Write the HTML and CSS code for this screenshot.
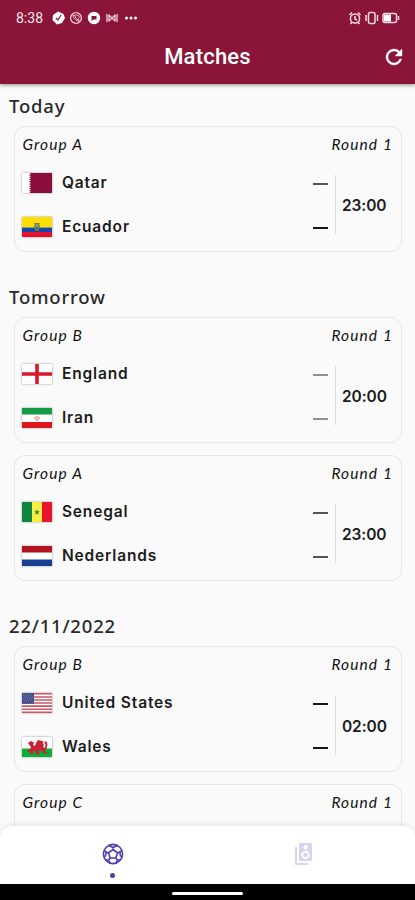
FILE: index.html
```html
<!DOCTYPE html>
<html lang="en">
<head>
<meta charset="utf-8">
<title>Matches</title>
<link rel="stylesheet" href="styles.css">
</head>
<body>
<div class="app">
  <header class="header">
    <div class="status">
      <span class="clock">8:38</span>
      <svg class="status-left" width="90" height="16" viewBox="0 0 90 16">
        <path d="M7 1.500 12.500 4 14 8l-3 5-5 1.500L1.500 10 2 5z" fill="#fff"/>
        <path d="M5 8l2 2 3-5" fill="none" stroke="#8a1538" stroke-width="1.200"/>
        <circle cx="25" cy="8" r="5.400" fill="none" stroke="#ecc5cf" stroke-width="1.400"/>
        <path d="M22 5c0 3 3 6 6 6l-.5-2-1.500.3-2-2.300.5-1.500zM25 4.500q3 0 3.500 3.500" fill="none" stroke="#ecc5cf"/>
        <circle cx="43" cy="8" r="6.200" fill="#fff"/>
        <path d="M40.500 6h5v3.500H42.500L40.500 11z" fill="#8a1538"/>
        <path d="M56 4v8M58 4.500v7M58 5l3 3 3-3M58 11l3-3 3 3M64 4.500v7M66 4v8" fill="none" stroke="#ecc5cf" stroke-width="1.400"/>
        <g fill="#fff"><circle cx="75.500" cy="8" r="1.500"/><circle cx="80" cy="8" r="1.500"/><circle cx="84.500" cy="8" r="1.500"/></g>
      </svg>
      <svg class="status-right" width="52" height="16" viewBox="0 0 52 16" fill="none" stroke="#f5d9df" stroke-width="1.500">
        <circle cx="6" cy="8.500" r="4.600"/><path d="M6 6v3l2 1M.5 5 3 2.500M11.500 5 9 2.500M3 12l-1.500 2M9 12l1.500 2"/>
        <rect x="19.500" y="2.500" width="6.500" height="11" rx="1.500"/><path d="M17 5v6M28.500 5v6"/>
        <rect x="34" y="3.500" width="13.500" height="9" rx="2"/><path d="M49.500 6v4"/><rect x="35" y="4.500" width="7" height="7" fill="#fff" stroke="none"/>
      </svg>
    </div>
    <div class="toolbar">
      <h1>Matches</h1>
      <svg class="refresh" width="24" height="24" viewBox="0 0 24 24"><path fill="#fff" stroke="#fff" stroke-width=".4" d="M17.650 6.350A8 8 0 1 0 19.730 14h-2.080A6 6 0 1 1 12 6c1.660 0 3.140.690 4.220 1.780L13 11h7V4z"/></svg>
    </div>
  </header>

  <main class="matches">
    <section>
      <h2>Today</h2>
      <article class="card">
        <div class="meta"><span>Group A</span><span>Round 1</span></div>
        <div class="fixture">
          <div class="teams">
            <div class="team"><svg class="flag" viewBox="0 0 30 20"><path fill="#fff" d="M0 0h30v20H0z"/><path fill="#8a0d3c" d="M30 0H7l2 1.100-2 1.100 2 1.100-2 1.100 2 1.100-2 1.100 2 1.100-2 1.100 2 1.200-2 1.100 2 1.100-2 1.100 2 1.100-2 1.100 2 1.100-2 1.100 2 1.100L7 20h23z"/></svg><span class="name">Qatar</span><i class="score soft"></i></div>
            <div class="team"><svg class="flag" viewBox="0 0 30 20"><path fill="#ffde00" d="M0 0h30v10.500H0z"/><path fill="#1648a8" d="M0 10.500h30V15H0z"/><path fill="#e8112d" d="M0 15h30v5H0z"/><path d="M11.500 6.500q2-1 3.500 0 1.500-1 3.500 0l-2.500 1.500h-2z" fill="#8c7225"/><ellipse cx="15" cy="10" rx="2.400" ry="3.500" fill="#80aaa8" stroke="#806b25"/><path d="M13.500 11l1.500-2 1.500 2v1.500h-3z" fill="#456f46"/></svg><span class="name">Ecuador</span><i class="score"></i></div>
          </div>
          <time>23:00</time>
        </div>
      </article>
    </section>

    <section>
      <h2>Tomorrow</h2>
      <article class="card">
        <div class="meta"><span>Group B</span><span>Round 1</span></div>
        <div class="fixture">
          <div class="teams">
            <div class="team"><svg class="flag" viewBox="0 0 30 20"><path fill="#fff" d="M0 0h30v20H0z"/><path fill="#d9162b" d="M13.200 0h3.600v8.200H30v3.600H16.800V20h-3.600v-8.200H0V8.200h13.200z"/></svg><span class="name">England</span><i class="score pale"></i></div>
            <div class="team"><svg class="flag" viewBox="0 0 30 20"><path fill="#fff" d="M0 0h30v20H0z"/><path fill="#159b45" d="M0 0h30v6.500H0z"/><path fill="#df1820" d="M0 14h30v6H0z"/><path d="M15 8v4.500M13.500 8.500q-2 2.500 1 3.500M16.500 8.500q2 2.500-1 3.500" fill="none" stroke="#e9818a"/></svg><span class="name">Iran</span><i class="score pale"></i></div>
          </div>
          <time>20:00</time>
        </div>
      </article>
      <article class="card">
        <div class="meta"><span>Group A</span><span>Round 1</span></div>
        <div class="fixture">
          <div class="teams">
            <div class="team"><svg class="flag" viewBox="0 0 30 20"><path fill="#11853f" d="M0 0h10v20H0z"/><path fill="#fdef42" d="M10 0h10v20H10z"/><path fill="#e9152c" d="M20 0h10v20H20z"/><path fill="#218b3e" d="M15 7l.8 2.200h2.200l-1.800 1.400.7 2.200L15 11.500l-1.900 1.300.7-2.200L12 9.200h2.200z"/></svg><span class="name">Senegal</span><i class="score soft"></i></div>
            <div class="team"><svg class="flag" viewBox="0 0 30 20"><path fill="#fff" d="M0 0h30v20H0z"/><path fill="#b3131e" d="M0 0h30v6.500H0z"/><path fill="#174093" d="M0 13.500h30V20H0z"/></svg><span class="name">Nederlands</span><i class="score soft"></i></div>
          </div>
          <time>23:00</time>
        </div>
      </article>
    </section>

    <section>
      <h2>22/11/2022</h2>
      <article class="card">
        <div class="meta"><span>Group B</span><span>Round 1</span></div>
        <div class="fixture">
          <div class="teams">
            <div class="team"><svg class="flag" viewBox="0 0 30 20"><path fill="#fff" d="M0 0h30v20H0z"/><path d="M0 .8h30M0 3.900h30M0 7h30M0 10h30M0 13.100h30M0 16.200h30M0 19.200h30" stroke="#cc5765" stroke-width="1.550"/><path fill="#45508b" d="M0 0h12v10.800H0z"/><path d="M1 2h10M2 4h9M1 6h10M2 8h9" stroke="#a9afcf" stroke-width=".7" stroke-dasharray=".7 1.300"/></svg><span class="name">United States</span><i class="score"></i></div>
            <div class="team"><svg class="flag" viewBox="0 0 30 20"><path fill="#fff" d="M0 0h30v20H0z"/><path fill="#0cae37" d="M0 11.500h30V20H0z"/><path fill="#ca2033" d="M6 6l3-2 3 1.500-1 2.500 2 1 1-3 2-3 6 1.500-1.500 1.500 1.500 2-1 2 2 1 .5-4-1.500-1 2-2 1.500 3-1 5-2 1.500 1.500 2h3l-1 1h-4l-2.500-3-3 .5 1 2.500-1 1h-3l1-1.500-2-2.500-2 1.500 2 2H8l1-2.500-3 .5-1-1.500 3-1 1-2.500z"/></svg><span class="name">Wales</span><i class="score"></i></div>
          </div>
          <time>02:00</time>
        </div>
      </article>
      <article class="card">
        <div class="meta"><span>Group C</span><span>Round 1</span></div>
      </article>
    </section>
  </main>

  <nav class="tabs">
    <div class="tab active">
      <svg width="24" height="24" viewBox="0 0 24 24" fill="none" stroke="#4d3db5" stroke-width="1.600"><circle cx="12" cy="12" r="9.600"/><path d="M12 7.500l4.500 3.300-1.700 5.200H9.200l-1.700-5.200zM12 7.500V5M16.500 10.800l2.400-.8M14.800 16l1.700 2.300M9.200 16l-1.700 2.300M7.500 10.800 5.100 10M8 3.500 12 5.500l4-2M21 8.500 18.900 10l.6 4 1.600.5M16.500 18.300l-1.800 3M16.500 18.300l3-.5M7.500 18.300l1.800 3M7.500 18.300l-3-.5M3 8.500 5.100 10l-.6 4-1.600.5"/></svg>
      <span class="dot"></span>
    </div>
    <div class="tab">
      <svg width="24" height="24" viewBox="0 0 24 24" fill="#d3d6ec"><path fill-rule="evenodd" d="M8.200 1H18.800Q20 1 20 2.200V17.800Q20 19 18.800 19H8.200Q7 19 7 17.800V2.200Q7 1 8.200 1zM13.500 3a2.200 2.200 0 1 0 0 4.400 2.200 2.200 0 0 0 0-4.400zM13.500 8.700a4.200 4.200 0 1 0 0 8.400 4.200 4.200 0 0 0 0-8.400z"/><circle cx="13.500" cy="12.900" r="2.400"/><path d="M3 5h2v16h11v2H4q-1 0-1-1z"/></svg>
    </div>
  </nav>
  <div class="system-bar"><span></span></div>
</div>
</body>
</html>
```
FILE: styles.css
```css
* { box-sizing: border-box; }
body { margin: 0; background: #fafafa; color: #1b1b1b; }
.app { height: 900px; display: flex; flex-direction: column; overflow: hidden; }
svg { display: block; flex: none; }

.header { flex: none; height: 84px; background: #8a1538; color: #fff; font-family: Roboto, sans-serif; box-shadow: 0 1px 4px rgba(0, 0, 0, .45); z-index: 1; }
.status { height: 35px; padding: 1px 14px 0 16px; display: flex; align-items: center; }
.clock { width: 35px; font-size: 14px; color: #f8e6ea; }
.status-right { margin-left: auto; }
.toolbar { height: 44px; display: grid; grid-template-columns: 24px 1fr 24px; align-items: center; padding: 0 9px; }
.toolbar h1 { grid-column: 2; margin: 0; text-align: center; font-size: 22px; font-weight: 500; line-height: 44px; letter-spacing: .2px; }

.matches { flex: 1; min-height: 0; overflow: hidden; padding: .6px 13px 0 13.500px; }
section { margin-bottom: 23.800px; }
h2 { height: 41px; margin: 0 0 0 -4.500px; padding-top: 8px; font: 500 18.500px/26px "Noto Sans", sans-serif; letter-spacing: .8px; color: #292929; }
.card { height: 126.300px; margin-bottom: 12px; border: 1px solid #e6e6e6; border-radius: 11px; padding: 6px 9px 0 7.400px; }
.meta { display: flex; justify-content: space-between; padding-left: .6px; font: italic 400 15.500px/22px Lato, sans-serif; letter-spacing: 1.100px; color: #111; }
.meta span:last-child { margin-right: -1px; }
.fixture { display: flex; align-items: center; padding-top: 6px; }
.teams { flex: 1; }
.team { height: 44px; display: flex; align-items: center; padding-right: 7px; }
.flag { width: 30px; height: 20px; box-shadow: 0 0 2px rgba(0, 0, 0, .4); }
.name { margin-left: 10px; font: 600 15.500px/22px Inter, sans-serif; letter-spacing: .85px; color: #1c1c1c; }
.score { width: 15px; height: 2px; margin: 2px 0 0 auto; background: #151515; }
.soft { background: #555; }
.pale { background: #909090; }
time { width: 57px; height: 59px; border-left: 1px solid #dedede; padding: 1px 0 0 6px; font: 600 15.500px/59px Inter, sans-serif; letter-spacing: -.1px; color: #1c1c1c; }

.tabs { flex: none; height: 58px; padding: 0 15px 0 17px; display: flex; background: #fff; border-radius: 12px 12px 0 0; box-shadow: 0 -1px 6px rgba(0, 0, 0, .09); z-index: 1; }
.tab { flex: 1; display: flex; flex-direction: column; align-items: center; padding-top: 16px; }
.dot { width: 5px; height: 5px; margin-top: 7px; border-radius: 50%; background: #4d3db5; }
.system-bar { flex: none; height: 16px; background: #000; display: flex; justify-content: center; padding-top: 8px; }
.system-bar span { width: 71px; height: 3px; border-radius: 2px; background: #fff; }
```
